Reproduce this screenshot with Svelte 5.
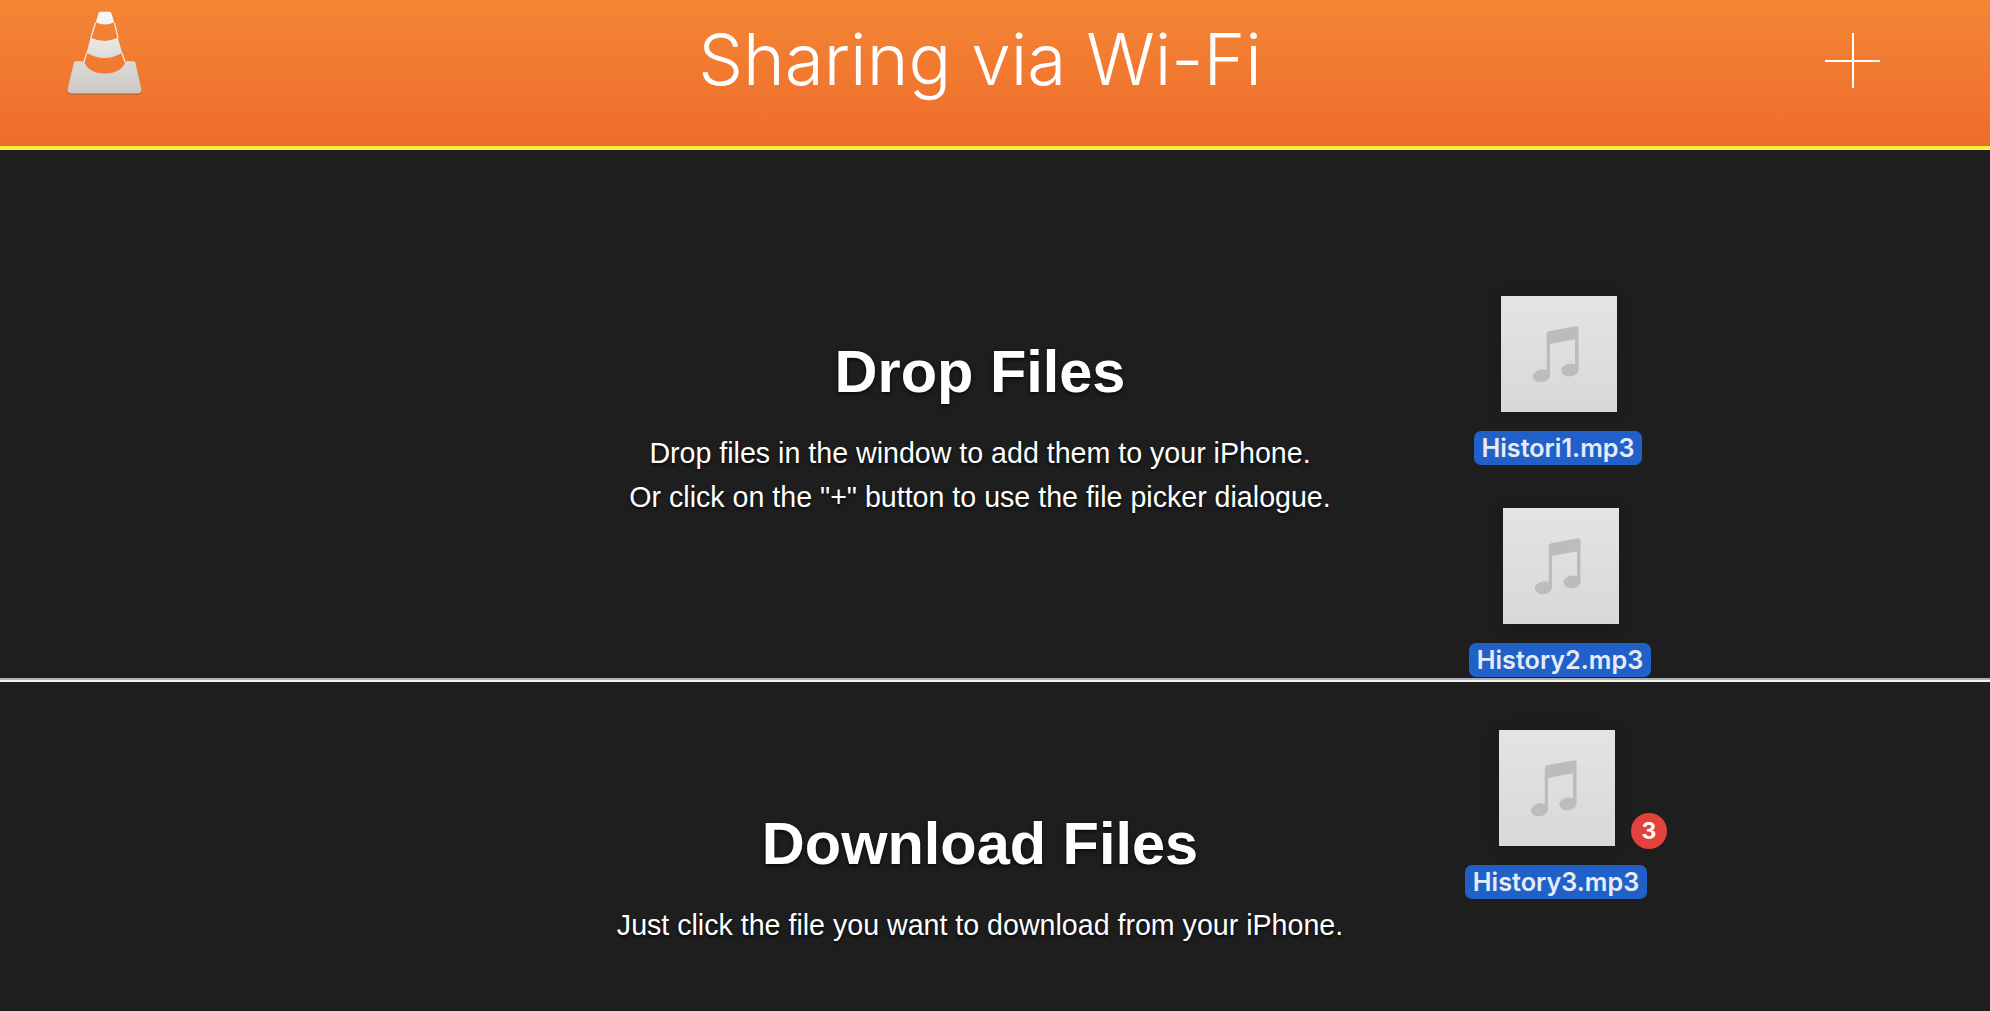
<script lang="ts">
  // files being dragged over the window, placed by their centre and top
  const dragged = [
    { name: "Histori1.mp3", cx: 1558, top: 296, badge: 0 },
    { name: "History2.mp3", cx: 1560, top: 508, badge: 0 },
    { name: "History3.mp3", cx: 1556, top: 730, badge: 3 },
  ];
</script>

<div class="page">
  <header class="top">
    <svg class="logo" viewBox="80 33 226 252" aria-label="VLC">
      <defs>
        <linearGradient id="cone" gradientUnits="userSpaceOnUse" x1="0" y1="33" x2="0" y2="285">
          <stop offset="0" stop-color="#faf9f7" />
          <stop offset="1" stop-color="#c9c6c3" />
        </linearGradient>
      </defs>
      <path class="shade" d="M106 188 H131 Q145 226 194 226 Q243 226 257 188 H281 Q285 188 286 192 L304 268 Q306 285 292 285 H94 Q80 285 82 268 L101 192 Q102 188 106 188Z" />
      <g fill="url(#cone)">
        <path d="M180 35 H208 Q213 35 215 42 L222 66 Q195 80 167 66 L174 42 Q175 35 180 35Z" />
        <path d="M151 113 Q194 132 233 113 L246 158 Q194 190 139 158Z" />
        <path d="M106 184 H131 Q145 221 194 221 Q243 221 257 184 H281 Q285 184 286 188 L304 266 Q306 281 292 281 H94 Q80 281 82 266 L101 188 Q102 184 106 184Z" />
      </g>
      <path class="edge" d="M166 68 L152 114 M223 68 L234 114 M140 158 L131 186 M245 158 L255 186" />
    </svg>
    <h1>Sharing via Wi-Fi</h1>
    <button class="add" aria-label="Add files"></button>
  </header>

  <section class="drop">
    <h2>Drop Files</h2>
    <p>Drop files in the window to add them to your iPhone.<br />Or click on the "+" button to use the file picker dialogue.</p>
  </section>

  <section class="download">
    <h2>Download Files</h2>
    <p>Just click the file you want to download from your iPhone.</p>
  </section>

  {#each dragged as f}
    <div class="drag" style="left: {f.cx - 100}px; top: {f.top}px;">
      <div class="thumb">
        <svg viewBox="0 0 116 116">
          <path d="M48 35.3 L75 30.3 Q77.5 30 77.5 32.5 V74 H74 V43.3 L49 48 V80 H45.7 V38 Q45.7 35.8 48 35.3Z" />
          <ellipse cx="69" cy="74" rx="8.6" ry="6.4" transform="rotate(-8 69 74)" />
          <ellipse cx="40.5" cy="79.8" rx="8.6" ry="6.4" transform="rotate(-8 40.5 79.8)" />
        </svg>
        {#if f.badge}
          <span class="badge">{f.badge}</span>
        {/if}
      </div>
      <span class="name">{f.name}</span>
    </div>
  {/each}
</div>

<style>
  :global(body) {
    margin: 0;
    background: #1e1e1e;
  }

  .page {
    position: relative;
    height: 1011px;
    overflow: hidden;
    background: #1e1e1e;
    color: #fff;
    font-family: "Liberation Sans", Arial, sans-serif;
  }

  .top {
    box-sizing: border-box;
    height: 150px;
    padding: 0 110px 0 80px;
    display: grid;
    grid-template-columns: 1fr auto 1fr;
    align-items: center;
    background: linear-gradient(#f38635, #ef6c2b);
    border-bottom: 4px solid #fff23c;
  }

  .logo {
    width: 75px;
    height: 84px;
    margin: -40px 0 0 -13px;
  }

  .shade {
    fill: #a9592c;
    opacity: 0.8;
  }

  .edge {
    fill: none;
    stroke: #eeeae6;
    stroke-width: 4;
  }

  h1 {
    margin: -28px 0 0 0;
    font-family: Inter, sans-serif;
    font-weight: 300;
    font-size: 71px;
    line-height: 88px;
    white-space: nowrap;
  }

  .add {
    justify-self: end;
    width: 55px;
    height: 55px;
    margin-top: -25px;
    padding: 0;
    border: 0;
    background: linear-gradient(#fff, #fff) center / 100% 2px no-repeat,
      linear-gradient(#fff, #fff) center / 2px 100% no-repeat;
    cursor: pointer;
  }

  section {
    box-sizing: border-box;
    padding-right: 30px;
    text-align: center;
  }

  .drop {
    height: 530px;
    padding-top: 186px;
    border-bottom: 2px solid #b0b0b0;
  }

  .download {
    padding-top: 126px;
    border-top: 2px solid #f2f2f2;
  }

  h2 {
    margin: 0 0 23px;
    font-size: 59.5px;
    line-height: 72px;
    font-weight: 700;
    text-shadow: 0 2px 4px rgba(0, 0, 0, 0.7);
  }

  p {
    margin: 0;
    font-size: 28.6px;
    line-height: 44px;
    text-shadow: 0 2px 3px rgba(0, 0, 0, 0.7);
  }

  .drag {
    position: absolute;
    width: 200px;
    display: flex;
    flex-direction: column;
    align-items: center;
    gap: 19px;
  }

  .thumb {
    position: relative;
    width: 116px;
    height: 116px;
    margin-left: 2px;
    background: linear-gradient(#e4e4e4, #d8d8d8);
    box-shadow: 0 2px 14px rgba(0, 0, 0, 0.2);
  }

  .thumb svg {
    display: block;
    fill: #bcbcbc;
  }

  .badge {
    position: absolute;
    left: 132px;
    top: 83px;
    width: 36px;
    height: 36px;
    border-radius: 50%;
    background: #e2423b;
    font: 700 23px/36px Inter, sans-serif;
    text-align: center;
    color: #fff;
  }

  .name {
    padding: 0 7.5px;
    height: 34px;
    border-radius: 7px;
    background: #2060c8;
    color: #e6ecf6;
    font: 600 25.2px/35px Inter, sans-serif;
    white-space: nowrap;
  }
</style>
